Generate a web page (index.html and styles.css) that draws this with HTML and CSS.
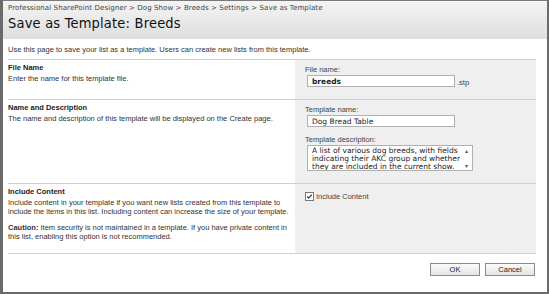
FILE: index.html
```html
<!DOCTYPE html>
<html lang="en">
<head>
  <meta charset="UTF-8">
  <title>Save as Template: Breeds</title>
  <link rel="stylesheet" href="styles.css">
</head>
<body>
  <div class="frame">
    <header class="page-head">
      <div class="crumbs">Professional SharePoint Designer &gt; Dog Show &gt; Breeds &gt; Settings &gt; Save as Template</div>
      <h1>Save as Template: Breeds</h1>
    </header>

    <p class="intro">Use this page to save your list as a template. Users can create new lists from this template.</p>

    <section class="form-table">
      <div class="row row-file">
        <div class="desc">
          <h3>File Name</h3>
          <p>Enter the name for this template file.</p>
        </div>
        <div class="ctrl">
          <label>File name:</label>
          <div class="inline">
            <div class="input bold">breeds</div>
            <span class="ext">.stp</span>
          </div>
        </div>
      </div>

      <div class="row row-name">
        <div class="desc">
          <h3>Name and Description</h3>
          <p>The name and description of this template will be displayed on the Create page.</p>
        </div>
        <div class="ctrl">
          <label>Template name:</label>
          <div class="input">Dog Bread Table</div>
          <label class="second">Template description:</label>
          <div class="textarea">
            <div class="ta-text">A list of various dog breeds, with fields indicating their AKC group and whether they are included in the current show.</div>
            <div class="scroll">
              <span>&#9652;</span>
              <span>&#9662;</span>
            </div>
          </div>
        </div>
      </div>

      <div class="row row-content">
        <div class="desc">
          <h3>Include Content</h3>
          <p>Include content in your template if you want new lists created from this template to include the items in this list. Including content can increase the size of your template.</p>
          <p class="caution"><b>Caution:</b>&nbsp;Item security is not maintained in a template. If you have private content in this list, enabling this option is not recommended.</p>
        </div>
        <div class="ctrl">
          <div class="check">
            <span class="box">
              <svg width="9" height="9" viewBox="0 0 9 9"><path d="M1.5 4.5 L3.5 6.5 L7.5 2" fill="none" stroke="#222" stroke-width="1.4"/></svg>
            </span>
            <span>Include Content</span>
          </div>
        </div>
      </div>
    </section>

    <div class="buttons">
      <button class="btn">OK</button>
      <button class="btn">Cancel</button>
    </div>
  </div>
</body>
</html>
```

FILE: styles.css
```css
/* Reset */
* {
  margin: 0;
  padding: 0;
  box-sizing: border-box;
}

body {
  width: 549px;
  height: 294px;
  background-color: #ffffff;
  font-family: 'DejaVu Sans', Verdana, sans-serif;
  color: #333;
  overflow: hidden;
}

/* Frame */
.frame {
  width: 549px;
  height: 294px;
  border-left: 3px solid #6b6b6b;
  border-right: 2px solid #6b6b6b;
  border-top: 1px solid #7a7a7a;
  border-bottom: 2px solid #6b6b6b;
  background-color: #ffffff;
}

/* Header */
.page-head {
  height: 38px;
  background: linear-gradient(180deg, #f4f4f4, #dedede);
  padding: 3px 0 0 5px;
}

.crumbs {
  font-size: 7px;
  color: #444;
  letter-spacing: 0.1px;
}

.page-head h1 {
  font-family: 'DejaVu Sans Condensed', 'DejaVu Sans', sans-serif;
  font-size: 14.5px;
  font-weight: normal;
  color: #111;
  margin-top: 3px;
  letter-spacing: 0.2px;
}

/* Intro */
.intro {
  font-family: 'Liberation Sans', Arial, sans-serif;
  font-size: 7.5px;
  color: #333;
  padding: 6px 0 0 5px;
  height: 20px;
}

/* Form rows */
.form-table {
  margin: 0 11px 0 5px;
}

.row {
  display: grid;
  grid-template-columns: 287px 1fr;
  border-top: 1px solid #d0d0d0;
}

.row-file {
  height: 40px;
}

.row-name {
  height: 84px;
}

.row-content {
  height: 71px;
  border-bottom: 1px solid #d0d0d0;
}

.desc {
  font-family: 'Liberation Sans', Arial, sans-serif;
  font-size: 7.5px;
  color: #333;
  padding-top: 3px;
}

.desc h3 {
  font-size: 7.5px;
  font-weight: bold;
  color: #222;
  margin-bottom: 2px;
}

.desc p {
  line-height: 9px;
}

.desc .caution {
  margin-top: 7px;
}

.ctrl {
  background-color: #efefef;
  padding: 5px 0 0 10px;
  font-family: 'Liberation Sans', Arial, sans-serif;
  font-size: 7.5px;
  color: #444;
}

.ctrl label {
  display: block;
  height: 10px;
}

.ctrl label.second {
  margin-top: 8px;
}

.inline {
  display: flex;
  align-items: flex-end;
  gap: 2px;
}

.input {
  width: 148px;
  height: 12px;
  margin: 0 0 0 2px;
  background-color: #fff;
  border: 1px solid #b0b0b0;
  font-family: 'DejaVu Sans', Verdana, sans-serif;
  font-size: 7.5px;
  color: #222;
  padding: 1px 0 0 4px;
  line-height: 9px;
}

.input.bold {
  font-weight: bold;
}

.ext {
  font-size: 7.5px;
  color: #444;
}

.textarea {
  display: flex;
  width: 166px;
  height: 26px;
  margin: 0 0 0 2px;
  background-color: #fff;
  border: 1px solid #b0b0b0;
}

.ta-text {
  flex: 1;
  font-family: 'DejaVu Sans', Verdana, sans-serif;
  font-size: 7.5px;
  line-height: 8px;
  color: #222;
  padding: 1px 0 0 4px;
  overflow: hidden;
}

.scroll {
  width: 12px;
  display: flex;
  flex-direction: column;
  justify-content: space-between;
  align-items: center;
  font-size: 6px;
  color: #555;
  padding: 1px 0;
}

.check {
  display: flex;
  align-items: center;
  gap: 2px;
  margin-top: 3px;
}

.box {
  width: 9px;
  height: 9px;
  border: 1px solid #777;
  background-color: #fff;
  display: flex;
}

.box svg {
  width: 7px;
  height: 7px;
}

/* Buttons */
.buttons {
  display: flex;
  justify-content: flex-end;
  gap: 5px;
  margin: 9px 12px 0 0;
}

.btn {
  width: 50px;
  height: 13px;
  font-family: 'Liberation Sans', Arial, sans-serif;
  font-size: 7.5px;
  color: #222;
  background: linear-gradient(180deg, #fbfbfb, #e4e4e4);
  border: 1px solid #8a8a8a;
}
```
